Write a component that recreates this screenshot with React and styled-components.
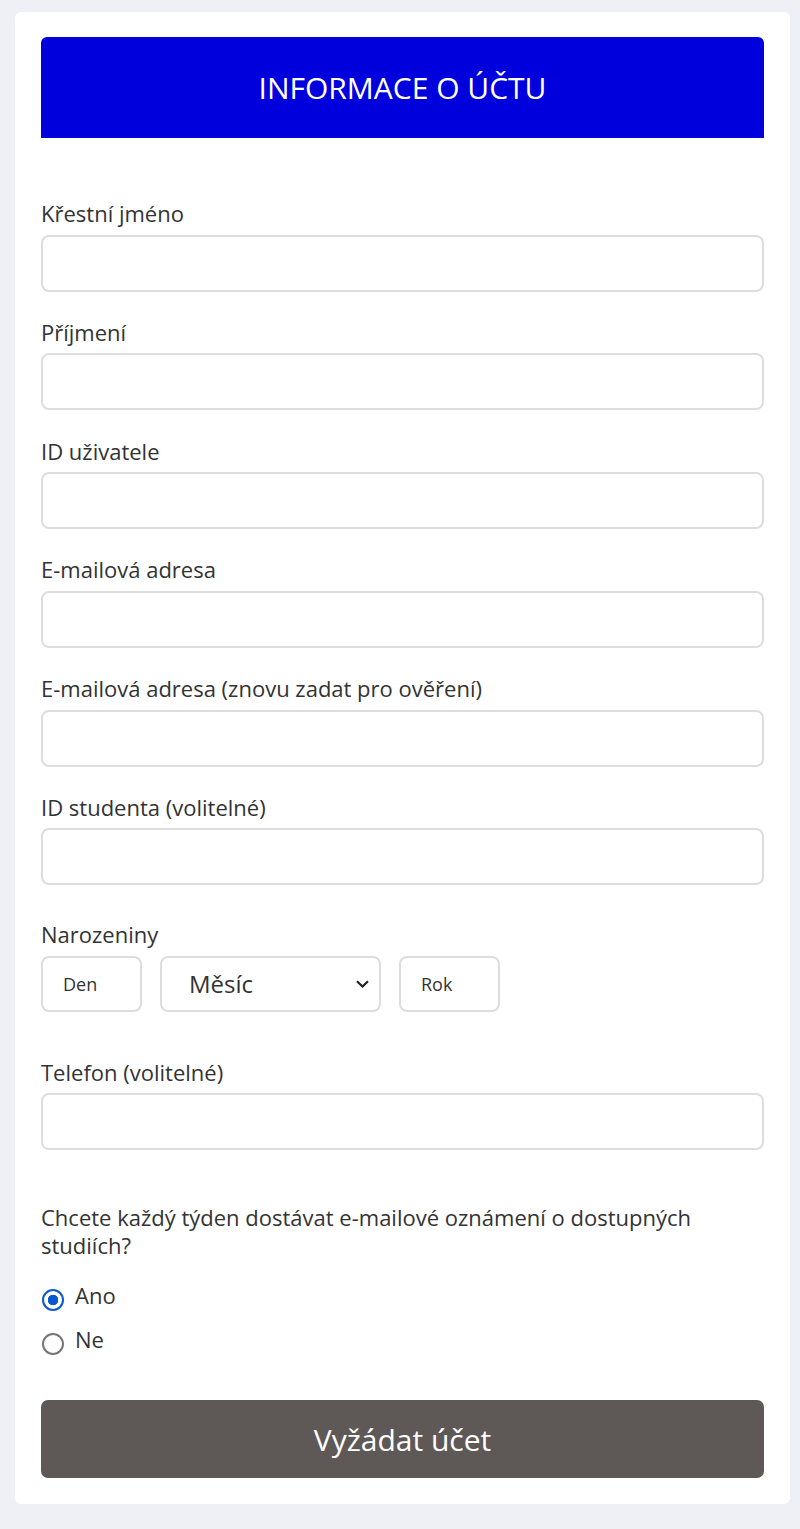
import React from "react";
import styled, { createGlobalStyle } from "styled-components";

const Global = createGlobalStyle`
  html, body { margin: 0; padding: 0; background: #eff0f5; }
  body { font-family: "Open Sans", "Noto Sans", sans-serif; color: #333; }
  * { box-sizing: border-box; }
`;

const Page = styled.div`
  padding: 12px 10px 24px 15px;
`;

const Card = styled.div`
  background: #fff;
  border-radius: 6px;
  padding: 25px 26px 26px 26px;
`;

const Header = styled.div`
  background: #0000dd;
  color: #fff;
  height: 101px;
  border-radius: 6px 6px 0 0;
  display: flex;
  align-items: center;
  justify-content: center;
  font-size: 30px;
  font-weight: 400;
`;

const Form = styled.form`
  display: flex;
  flex-direction: column;
  padding-top: 61px;
`;

const Field = styled.div`
  display: flex;
  flex-direction: column;
  margin-top: ${(p) => p.$top || 0}px;
`;

const Label = styled.label`
  font-size: 22px;
  line-height: 28px;
  color: #333;
  margin-bottom: 7.5px;
`;

const TextInput = styled.input`
  height: 57px;
  width: 100%;
  border: 2px solid #dddddd;
  border-radius: 8px;
  background: #fff;
  font-family: inherit;
  font-size: 18px;
  padding: 0 16px;
  outline: none;
`;

const DateRow = styled.div`
  display: flex;
  gap: 18px;
`;

const SmallBox = styled.input`
  width: 101px;
  height: 56px;
  border: 2px solid #dddddd;
  border-radius: 8px;
  font-family: inherit;
  font-size: 18px;
  padding: 0 0 0 20px;
  color: #333;
  outline: none;
  &::placeholder { color: #333; opacity: 1; }
`;

const SelectWrap = styled.div`
  position: relative;
  width: 221px;
  height: 56px;
`;

const Select = styled.select`
  appearance: none;
  -webkit-appearance: none;
  width: 100%;
  height: 100%;
  border: 2px solid #dddddd;
  border-radius: 8px;
  background: #fff;
  font-family: inherit;
  font-size: 24px;
  color: #333;
  padding: 0 0 0 27px;
  outline: none;
`;

const Chevron = styled.svg`
  position: absolute;
  right: 12px;
  top: 24px;
  pointer-events: none;
`;

const Question = styled.p`
  margin: 53px 0 0 0;
  font-size: 22px;
  line-height: 28px;
  color: #333;
`;

const RadioGroup = styled.div`
  display: flex;
  flex-direction: column;
  gap: 14px;
  margin-top: 22px;
`;

const RadioRow = styled.label`
  display: flex;
  align-items: flex-start;
  gap: 11px;
  font-size: 22px;
  line-height: 28px;
  color: #333;
`;

const Radio = styled.input`
  appearance: none;
  -webkit-appearance: none;
  margin: 8px 0 0 1px;
  width: 22px;
  height: 22px;
  border-radius: 50%;
  border: 2px solid #767676;
  background: #fff;
  flex: none;
  &:checked {
    border-color: #0b57d0;
    background: radial-gradient(circle, #0b57d0 0 5px, #fff 5.5px);
  }
`;

const SubmitButton = styled.button`
  margin-top: 45px;
  height: 78px;
  width: 100%;
  border: none;
  border-radius: 7px;
  background: #5e5957;
  color: #fff;
  font-family: inherit;
  font-size: 30px;
  cursor: pointer;
`;

const fields = [
  "Křestní jméno",
  "Příjmení",
  "ID uživatele",
  "E-mailová adresa",
  "E-mailová adresa (znovu zadat pro ověření)",
  "ID studenta (volitelné)",
];

export default function App() {
  return (
    <>
      <Global />
      <Page>
        <Card>
          <Header>INFORMACE O ÚČTU</Header>
          <Form onSubmit={(e) => e.preventDefault()}>
            {fields.map((f, i) => (
              <Field key={f} $top={i === 0 ? 0 : 26.3}>
                <Label>{f}</Label>
                <TextInput type="text" />
              </Field>
            ))}
            <Field $top={35}>
              <Label>Narozeniny</Label>
              <DateRow>
                <SmallBox placeholder="Den" />
                <SelectWrap>
                  <Select defaultValue="">
                    <option value="">Měsíc</option>
                  </Select>
                  <Chevron width="13" height="8" viewBox="0 0 13 8">
                    <path d="M1 1.2 L6.5 6.5 L12 1.2" fill="none" stroke="#222" strokeWidth="2.2" />
                  </Chevron>
                </SelectWrap>
                <SmallBox placeholder="Rok" />
              </DateRow>
            </Field>
            <Field $top={46}>
              <Label>Telefon (volitelné)</Label>
              <TextInput type="text" />
            </Field>
            <Question>
              Chcete každý týden dostávat e-mailové oznámení o dostupných studiích?
            </Question>
            <RadioGroup>
              <RadioRow>
                <Radio type="radio" name="notify" defaultChecked />
                Ano
              </RadioRow>
              <RadioRow>
                <Radio type="radio" name="notify" />
                Ne
              </RadioRow>
            </RadioGroup>
            <SubmitButton type="submit">Vyžádat účet</SubmitButton>
          </Form>
        </Card>
      </Page>
    </>
  );
}
